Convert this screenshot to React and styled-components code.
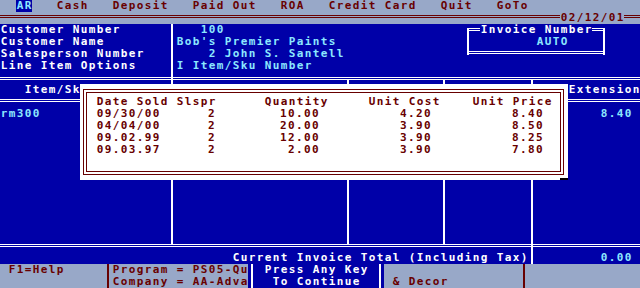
import React from 'react'
import styled, { createGlobalStyle } from 'styled-components'

const GRAY = '#98a8c8'
const MAROON = '#680000'
const BLUE = '#0000a8'
const CYAN = '#8ce8ff'
const WHITE = '#ffffff'

const GlobalStyle = createGlobalStyle`
  html, body {
    margin: 0;
    padding: 0;
    background: ${BLUE};
  }
  body {
    width: 640px;
    height: 288px;
    overflow: hidden;
  }
`

// every part of the screen sits on the 8x12 character cell grid
const place = ({ $col = 0, $row = 0, $span = 1, $rows = 1 }) => `
  grid-column: ${$col + 1} / span ${$span};
  grid-row: ${$row + 1} / span ${$rows};
`

const Screen = styled.div`
  width: 640px;
  height: 288px;
  display: flex;
  flex-direction: column;
  font-family: 'DejaVu Sans Mono', 'Liberation Mono', monospace;
  font-weight: bold;
  font-size: 11px;
  line-height: 12px;
  letter-spacing: 1.377px;
  white-space: pre;
`

const Band = styled.div`
  display: grid;
  grid-template-columns: repeat(${(p) => p.$cols || 80}, 8px);
  grid-template-rows: repeat(${(p) => p.$rows}, 12px);
  background: ${(p) => p.$bg};
  color: ${(p) => p.$fg};
`

const Chars = styled.span.attrs((p) => ({
  $span: p.$span ?? String(p.children).length,
}))`
  ${place};
  padding-left: 0.7px;
  color: ${(p) => p.$color || 'inherit'};
  text-align: ${(p) => p.$align || 'left'};
  padding-right: ${(p) => (p.$trail || 0) * 8}px;
`

const MenuItem = styled(Chars)`
  color: ${(p) => (p.$active ? CYAN : MAROON)};
  background: ${(p) => (p.$active ? BLUE : 'transparent')};
`

const DoubleRule = styled.div`
  grid-column: ${(p) => p.$from + 1} / ${(p) => p.$to + 2};
  grid-row: ${(p) => p.$row + 1};
  align-self: start;
  margin-top: ${(p) => p.$offset ?? 4}px;
  margin-left: ${(p) => p.$inL || 0}px;
  margin-right: ${(p) => p.$inR || 0}px;
  height: 1px;
  border-top: 1px solid ${(p) => p.$color || 'currentColor'};
  border-bottom: 1px solid ${(p) => p.$color || 'currentColor'};
`

const VRule = styled.div`
  grid-column: ${(p) => p.$col + 1};
  grid-row: ${(p) => p.$from + 1} / ${(p) => p.$to + 2};
  justify-self: center;
  width: 2px;
  margin-top: ${(p) => p.$top || 0}px;
  margin-bottom: ${(p) => p.$bottom || 0}px;
  background: ${(p) => p.$color || 'currentColor'};
`

const Popup = styled.div`
  ${place};
  position: relative;
  display: grid;
  grid-template-columns: repeat(61, 8px);
  grid-template-rows: repeat(8, 12px);
  background: ${WHITE};
  color: ${MAROON};

  &::after {
    content: '';
    position: absolute;
    right: 0;
    bottom: 0;
    width: 8px;
    height: 2px;
    background: #000;
  }
`

const PopupFrame = styled.div`
  grid-column: 1 / -1;
  grid-row: 1 / -1;
  margin: 5px 4px 5px 3px;
  border: 1px solid ${MAROON};
  box-shadow: inset 0 0 0 2px ${WHITE}, inset 0 0 0 3px ${MAROON};
`

const KeyPrompt = styled.div`
  ${place};
  display: grid;
  grid-template-columns: repeat(17, 8px);
  grid-template-rows: repeat(2, 12px);
  background: ${BLUE};
  color: ${WHITE};
`

const menu = [
  ['AR', 2, true],
  ['Cash', 7],
  ['Deposit', 14],
  ['Paid Out', 24],
  ['ROA', 35],
  ['Credit Card', 41],
  ['Quit', 55],
  ['GoTo', 62],
]

const history = [
  ['09/30/00', '2', '10.00', '4.20', '8.40'],
  ['04/04/00', '2', '20.00', '3.90', '8.50'],
  ['09.02.99', '2', '12.00', '3.90', '8.25'],
  ['09.03.97', '2', '2.00', '3.90', '7.80'],
]

// popup columns, in popup cells (screen column - 10)
const historyCols = [
  { title: 'Date Sold', col: 2, span: 9, align: 'left', trail: 0 },
  { title: 'Slspr', col: 12, span: 5, align: 'right', trail: 0 },
  { title: 'Quantity', col: 23, span: 8, align: 'right', trail: 1 },
  { title: 'Unit Cost', col: 36, span: 9, align: 'right', trail: 1 },
  { title: 'Unit Price', col: 49, span: 10, align: 'right', trail: 1 },
]

export default function App() {
  return (
    <>
      <GlobalStyle />
      <Screen>
        <Band $rows={1} $bg={GRAY} $fg={MAROON}>
          {menu.map(([label, col, active]) => (
            <MenuItem key={label} $col={col} $active={active}>
              {label}
            </MenuItem>
          ))}
        </Band>

        <Band $rows={1} $bg={GRAY} $fg={MAROON}>
          <DoubleRule $from={0} $to={69} $row={0} $offset={3} />
          <Chars $col={70}>02/12/01</Chars>
          <DoubleRule $from={78} $to={79} $row={0} $offset={3} />
        </Band>

        <Band $rows={4} $bg={BLUE} $fg={WHITE}>
          <Chars $row={0}>Customer Number</Chars>
          <Chars $row={1}>Customer Name</Chars>
          <Chars $row={2}>Salesperson Number</Chars>
          <Chars $row={3}>Line Item Options</Chars>
          <VRule $col={21} $from={0} $to={3} />
          <Chars $col={25} $row={0} $color={CYAN}>100</Chars>
          <Chars $col={22} $row={1} $color={CYAN}>Bob's Premier Paints</Chars>
          <Chars $col={26} $row={2} $color={CYAN}>2 John S. Santell</Chars>
          <Chars $col={22} $row={3} $color={CYAN}>I Item/Sku Number</Chars>

          <DoubleRule $from={58} $to={59} $row={0} $inL={3} />
          <Chars $col={60} $row={0}>Invoice Number</Chars>
          <DoubleRule $from={74} $to={75} $row={0} $inR={3} />
          <VRule $col={58} $from={0} $to={2} $top={4} $bottom={5} />
          <VRule $col={75} $from={0} $to={2} $top={4} $bottom={5} />
          <Chars $col={67} $row={1} $color={CYAN}>AUTO</Chars>
          <DoubleRule $from={58} $to={75} $row={2} $offset={3} $inL={3} $inR={3} />
        </Band>

        <Band $rows={15} $bg={BLUE} $fg={WHITE}>
          <DoubleRule $from={0} $to={79} $row={0} $offset={5} />
          <Chars $col={3} $row={1}>Item/Sku</Chars>
          <Chars $col={71} $row={1}>Extension</Chars>
          <DoubleRule $from={0} $to={79} $row={2} $offset={3} />
          <Chars $col={0} $row={3} $color={CYAN}>rm300</Chars>
          <Chars $col={75} $row={3} $color={CYAN}>8.40</Chars>
          <DoubleRule $from={0} $to={79} $row={14} $offset={4} />
          <VRule $col={21} $from={0} $to={14} $bottom={7} />
          <VRule $col={43} $from={0} $to={14} $top={8} $bottom={7} />
          <VRule $col={55} $from={0} $to={14} $top={8} $bottom={7} />
          <VRule $col={66} $from={0} $to={14} $top={8} />

          <Popup $col={10} $row={1} $span={61} $rows={8}>
            <PopupFrame />
            {historyCols.map((c) => (
              <Chars key={c.title} $col={c.col} $row={1} $span={c.span}>
                {c.title}
              </Chars>
            ))}
            {history.map((line, r) =>
              line.map((value, i) => {
                const c = historyCols[i]
                return (
                  <Chars
                    key={`${r}-${i}`}
                    $col={c.col}
                    $row={r + 2}
                    $span={c.span}
                    $align={c.align}
                    $trail={c.trail}
                  >
                    {value}
                  </Chars>
                )
              })
            )}
          </Popup>
        </Band>

        <Band $rows={1} $bg={BLUE} $fg={WHITE}>
          <Chars $col={29}>Current Invoice Total (Including Tax)</Chars>
          <VRule $col={66} $from={0} $to={0} />
          <Chars $col={75} $color={CYAN}>0.00</Chars>
        </Band>

        <Band $rows={2} $bg={GRAY} $fg={MAROON}>
          <Chars $col={1} $row={0}>F1=Help</Chars>
          <VRule $col={13} $from={0} $to={1} />
          <Chars $col={14} $row={0}>Program = PS05-Qu</Chars>
          <Chars $col={14} $row={1}>Company = AA-Adva</Chars>
          <Chars $col={49} $row={1}>& Decor</Chars>
          <VRule $col={65} $from={0} $to={1} />
          <KeyPrompt $col={31} $row={0} $span={17} $rows={2}>
            <VRule $col={0} $from={0} $to={1} />
            <Chars $col={2} $row={0}>Press Any Key</Chars>
            <Chars $col={3} $row={1}>To Continue</Chars>
            <VRule $col={16} $from={0} $to={1} />
          </KeyPrompt>
        </Band>
      </Screen>
    </>
  )
}
